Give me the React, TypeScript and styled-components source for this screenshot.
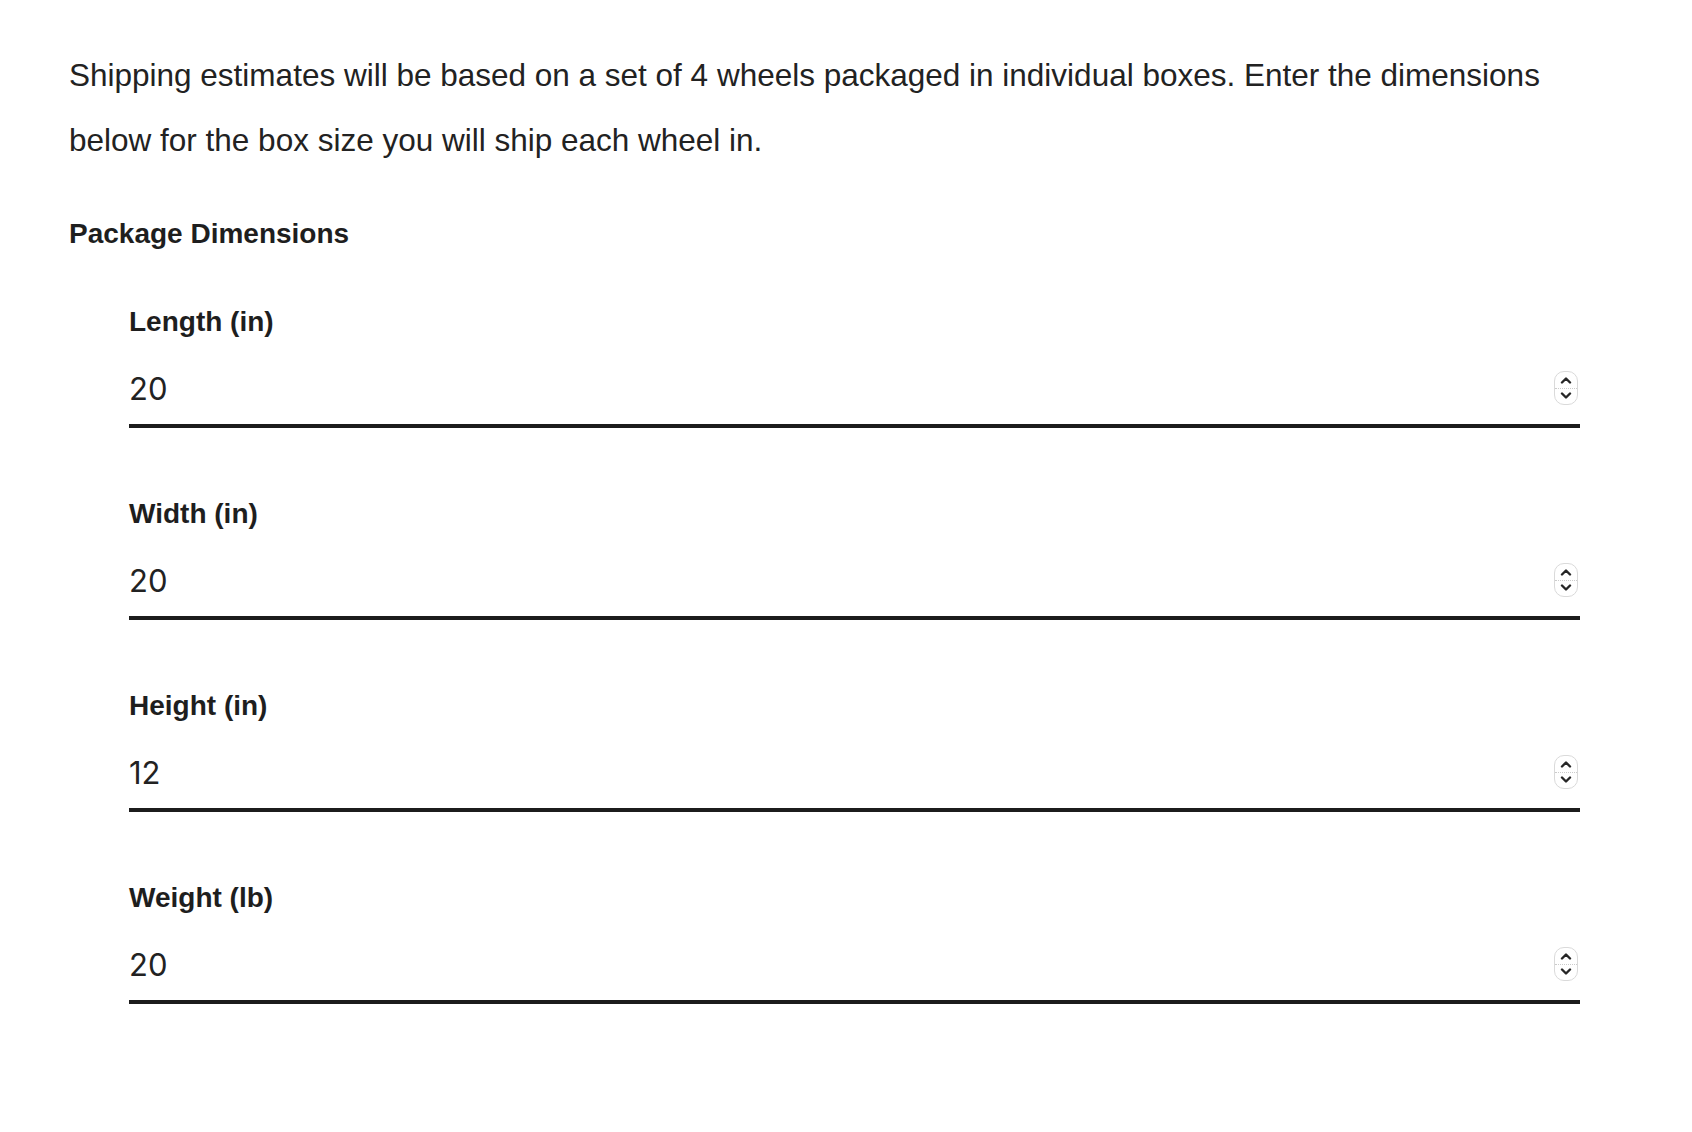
import React, { FC } from 'react';
import styled, { createGlobalStyle } from 'styled-components';

const GlobalStyle = createGlobalStyle`
  html, body {
    margin: 0;
    padding: 0;
    background: #ffffff;
  }
  body {
    font-family: "Liberation Sans", Arial, sans-serif;
    color: #222222;
  }
`;

const Page = styled.div`
  padding: 43px 69px 80px 69px;
  box-sizing: border-box;
  width: 1692px;
`;

const Intro = styled.p`
  margin: 0;
  width: 1510px;
  font-size: 31.5px;
  line-height: 65px;
  color: #222222;
`;

const Heading = styled.h3`
  margin: 41px 0 0 0;
  font-size: 28px;
  line-height: 40px;
  font-weight: 700;
  color: #1e1e1e;
`;

const Fields = styled.div`
  display: flex;
  flex-direction: column;
  gap: 66px;
  margin-top: 48px;
  padding-left: 60px;
  width: 1451px;
`;

const Field = styled.div`
  display: flex;
  flex-direction: column;
`;

const Label = styled.label`
  font-size: 28px;
  line-height: 40px;
  font-weight: 700;
  color: #1e1e1e;
  margin-bottom: 10px;
`;

const InputRow = styled.div`
  display: flex;
  align-items: center;
  height: 76px;
  box-sizing: border-box;
  border-bottom: 4px solid #1c1c1c;
  padding-right: 2px;
`;

const NumberInput = styled.input`
  flex: 1;
  border: none;
  outline: none;
  background: transparent;
  padding: 0;
  font-family: Inter, "Noto Sans", sans-serif;
  font-size: 31px;
  color: #222222;
  -moz-appearance: textfield;
  &::-webkit-inner-spin-button,
  &::-webkit-outer-spin-button {
    -webkit-appearance: none;
    margin: 0;
  }
`;

const Spinner = styled.div`
  width: 24px;
  height: 34px;
  box-sizing: border-box;
  border: 1px solid #dadada;
  border-radius: 10px;
  display: flex;
  flex-direction: column;
`;

const SpinHalf = styled.div<{ $top?: boolean }>`
  flex: 1;
  display: flex;
  align-items: center;
  justify-content: center;
  border-bottom: ${(p) => (p.$top ? '1px dotted #cccccc' : 'none')};
`;

const Chevron: FC<{ up?: boolean }> = ({ up }) => (
  <svg width="12" height="8" viewBox="0 0 12 8">
    <path
      d={up ? 'M2 6.5 L6 2.5 L10 6.5' : 'M2 1.5 L6 5.5 L10 1.5'}
      fill="none"
      stroke="#262626"
      strokeWidth="2.4"
      strokeLinecap="round"
      strokeLinejoin="round"
    />
  </svg>
);

const fields = [
  { id: 'length', name: 'Length (in)', value: 20 },
  { id: 'width', name: 'Width (in)', value: 20 },
  { id: 'height', name: 'Height (in)', value: 12 },
  { id: 'weight', name: 'Weight (lb)', value: 20 },
];

const App: FC = () => {
  return (
    <>
      <GlobalStyle />
      <Page>
        <Intro>
          Shipping estimates will be based on a set of 4 wheels packaged in individual boxes. Enter the dimensions
          below for the box size you will ship each wheel in.
        </Intro>
        <Heading>Package Dimensions</Heading>
        <Fields>
          {fields.map(({ id, name, value }) => (
            <Field key={id}>
              <Label htmlFor={id}>{name}</Label>
              <InputRow>
                <NumberInput id={id} type="number" defaultValue={value} />
                <Spinner>
                  <SpinHalf $top>
                    <Chevron up />
                  </SpinHalf>
                  <SpinHalf>
                    <Chevron />
                  </SpinHalf>
                </Spinner>
              </InputRow>
            </Field>
          ))}
        </Fields>
      </Page>
    </>
  );
};

export default App;
